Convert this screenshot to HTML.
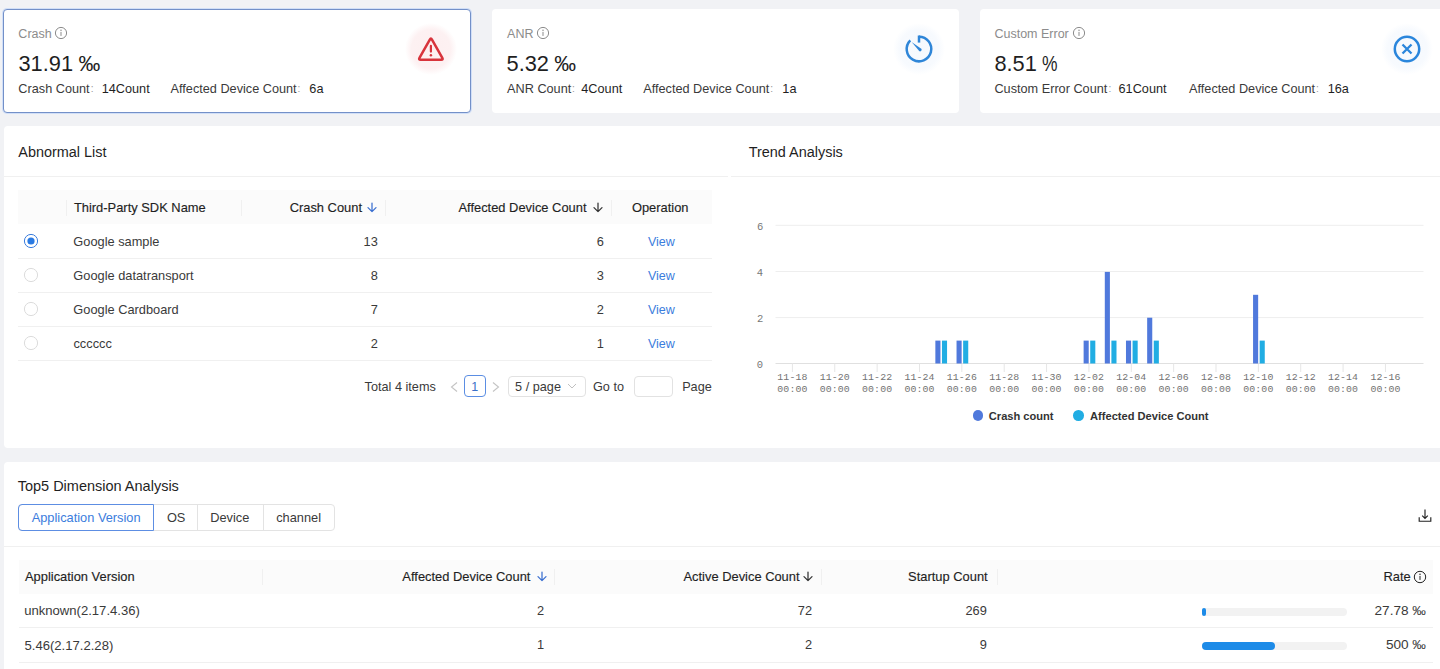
<!DOCTYPE html>
<html><head><meta charset="utf-8"><style>
html,body{margin:0;padding:0;}
body{width:1440px;height:669px;overflow:hidden;background:#f1f2f5;position:relative;font-family:"Liberation Sans",sans-serif;}
.t{position:absolute;white-space:nowrap;line-height:1;}
.b{position:absolute;}
</style></head><body>
<div class="b" style="left:3px;top:9px;width:468px;height:104px;background:#fff;border-radius:4px;border:1px solid #7390c8;box-sizing:border-box;box-shadow:0 0 0 1px rgba(170,200,250,0.45);"></div>
<div class="t" style="left:18.37px;top:27.62px;font-size:12.5px;color:#8c8c8c;">Crash</div>
<svg class="b" style="left:53.23173828125px;top:25.200000000000003px;" width="16" height="16" viewBox="0 0 16 16"><circle cx="8" cy="8" r="5.6" fill="none" stroke="#8c8c8c" stroke-width="1"/><circle cx="8" cy="5.3" r="0.75" fill="#8c8c8c"/><rect x="7.5" y="6.9" width="1" height="4" fill="#8c8c8c"/></svg>
<div class="t" style="left:18.47px;top:52.84px;font-size:21.8px;color:#1f1f1f;">31.91</div>
<div class="t" style="left:78.40px;top:52.84px;font-size:21.8px;color:#1f1f1f;">‰</div>
<div class="t" style="left:18.36px;top:82.75px;font-size:12.7px;color:#3a3a3a;">Crash Count</div>
<div class="t" style="left:90.87px;top:84.20px;font-size:10.16px;color:#999;">:</div>
<div class="t" style="left:101.73px;top:82.75px;font-size:12.7px;color:#1f1f1f;">14Count</div>
<div class="t" style="left:170.58px;top:82.75px;font-size:12.7px;color:#3a3a3a;">Affected Device Count</div>
<div class="t" style="left:297.54px;top:84.20px;font-size:10.16px;color:#999;">:</div>
<div class="t" style="left:309.36px;top:82.75px;font-size:12.7px;color:#1f1f1f;">6a</div>
<div class="b" style="left:404.5px;top:22.5px;width:52px;height:52px;border-radius:50%;background:radial-gradient(circle closest-side,#fdeff0 0%,#fdf1f2 75%,rgba(253,241,242,0) 100%);"></div>
<svg class="b" style="left:415.5px;top:33.5px;" width="30" height="30" viewBox="0 0 30 30"><path d="M15.98 5.52 L26.32 23.88 Q27.4 25.8 25.2 25.8 L4.6 25.8 Q2.4 25.8 3.48 23.88 L13.82 5.52 Q14.9 3.6 15.98 5.52 Z" fill="none" stroke="#d8343c" stroke-width="2.5" stroke-linejoin="round"/><path d="M14.9 11.9 V17.6" stroke="#d8343c" stroke-width="2.2" stroke-linecap="round"/><circle cx="14.9" cy="21.2" r="1.25" fill="#d8343c"/></svg>
<div class="b" style="left:491.5px;top:9px;width:467px;height:104px;background:#fff;border-radius:4px;"></div>
<div class="t" style="left:507.08px;top:27.62px;font-size:12.5px;color:#8c8c8c;">ANR</div>
<svg class="b" style="left:534.6117675781251px;top:25.200000000000003px;" width="16" height="16" viewBox="0 0 16 16"><circle cx="8" cy="8" r="5.6" fill="none" stroke="#8c8c8c" stroke-width="1"/><circle cx="8" cy="5.3" r="0.75" fill="#8c8c8c"/><rect x="7.5" y="6.9" width="1" height="4" fill="#8c8c8c"/></svg>
<div class="t" style="left:506.53px;top:52.84px;font-size:21.8px;color:#1f1f1f;">5.32</div>
<div class="t" style="left:554.35px;top:52.84px;font-size:21.8px;color:#1f1f1f;">‰</div>
<div class="t" style="left:507.08px;top:82.75px;font-size:12.7px;color:#3a3a3a;">ANR Count</div>
<div class="t" style="left:571.91px;top:84.20px;font-size:10.16px;color:#999;">:</div>
<div class="t" style="left:581.31px;top:82.75px;font-size:12.7px;color:#1f1f1f;">4Count</div>
<div class="t" style="left:643.28px;top:82.75px;font-size:12.7px;color:#3a3a3a;">Affected Device Count</div>
<div class="t" style="left:770.24px;top:84.20px;font-size:10.16px;color:#999;">:</div>
<div class="t" style="left:782.33px;top:82.75px;font-size:12.7px;color:#1f1f1f;">1a</div>
<div class="b" style="left:892.5px;top:22.5px;width:52px;height:52px;border-radius:50%;background:radial-gradient(circle closest-side,#f6f9fd 0%,#f7fafe 75%,rgba(247,250,254,0) 100%);"></div>
<svg class="b" style="left:902.5px;top:32.5px;" width="32" height="32" viewBox="0 0 32 32"><path d="M7.3 7.3 A12.3 12.3 0 1 0 16 3.7" fill="none" stroke="#2f86d8" stroke-width="2.5"/><path d="M16 2.5 V9.6" stroke="#2f86d8" stroke-width="2.5"/><path d="M8.6 9.0 L18.6 15.9 Q18.9 17.6 17.6 18.3 Q16.8 18.6 16.2 18.0 Z" fill="#2f86d8"/></svg>
<div class="b" style="left:980px;top:9px;width:467px;height:104px;background:#fff;border-radius:4px;"></div>
<div class="t" style="left:994.47px;top:27.62px;font-size:12.5px;color:#8c8c8c;">Custom Error</div>
<svg class="b" style="left:1070.90888671875px;top:25.200000000000003px;" width="16" height="16" viewBox="0 0 16 16"><circle cx="8" cy="8" r="5.6" fill="none" stroke="#8c8c8c" stroke-width="1"/><circle cx="8" cy="5.3" r="0.75" fill="#8c8c8c"/><rect x="7.5" y="6.9" width="1" height="4" fill="#8c8c8c"/></svg>
<div class="t" style="left:994.45px;top:52.84px;font-size:21.8px;color:#1f1f1f;">8.51</div>
<div class="t" style="left:1042.19px;top:52.84px;font-size:21.8px;color:#1f1f1f;transform:scaleX(0.8);transform-origin:0 0;">%</div>
<div class="t" style="left:994.46px;top:82.75px;font-size:12.7px;color:#3a3a3a;">Custom Error Count</div>
<div class="t" style="left:1108.60px;top:84.20px;font-size:10.16px;color:#999;">:</div>
<div class="t" style="left:1118.56px;top:82.75px;font-size:12.7px;color:#1f1f1f;">61Count</div>
<div class="t" style="left:1189.08px;top:82.75px;font-size:12.7px;color:#3a3a3a;">Affected Device Count</div>
<div class="t" style="left:1316.04px;top:84.20px;font-size:10.16px;color:#999;">:</div>
<div class="t" style="left:1327.63px;top:82.75px;font-size:12.7px;color:#1f1f1f;">16a</div>
<div class="b" style="left:1380.8px;top:22.5px;width:52px;height:52px;border-radius:50%;background:radial-gradient(circle closest-side,#f6f9fd 0%,#f7fafe 75%,rgba(247,250,254,0) 100%);"></div>
<svg class="b" style="left:1390.8px;top:32.5px;" width="32" height="32" viewBox="0 0 32 32"><circle cx="16" cy="16" r="12.2" fill="none" stroke="#2a86dc" stroke-width="2.5"/><path d="M11.5 11.5 L20.5 20.5 M20.5 11.5 L11.5 20.5" stroke="#2a86dc" stroke-width="2.3"/></svg>
<div class="b" style="left:4px;top:126px;width:1446px;height:321.5px;background:#fff;border-radius:4px;"></div>
<div class="b" style="left:4px;top:176px;width:724px;height:1px;background:#f0f0f0;"></div>
<div class="b" style="left:731px;top:176px;width:709px;height:1px;background:#f0f0f0;"></div>
<div class="t" style="left:18.27px;top:144.87px;font-size:14.45px;color:#1f1f1f;">Abnormal List</div>
<div class="t" style="left:748.68px;top:144.87px;font-size:14.45px;color:#1f1f1f;">Trend Analysis</div>
<div class="b" style="left:18px;top:190px;width:694px;height:34px;background:#fbfbfb;"></div>
<div class="b" style="left:66px;top:200px;width:1px;height:16px;background:#f0f0f0;"></div>
<div class="b" style="left:241px;top:200px;width:1px;height:16px;background:#f0f0f0;"></div>
<div class="b" style="left:385px;top:200px;width:1px;height:16px;background:#f0f0f0;"></div>
<div class="b" style="left:611px;top:200px;width:1px;height:16px;background:#f0f0f0;"></div>
<div class="t" style="left:73.91px;top:201.58px;font-size:12.9px;color:#1f1f1f;-webkit-text-stroke:0.15px #1f1f1f;">Third-Party SDK Name</div>
<div class="t" style="left:289.64px;top:201.58px;font-size:12.9px;color:#1f1f1f;-webkit-text-stroke:0.15px #1f1f1f;">Crash Count</div>
<div class="t" style="left:458.47px;top:201.58px;font-size:12.9px;color:#1f1f1f;-webkit-text-stroke:0.15px #1f1f1f;">Affected Device Count</div>
<div class="t" style="left:631.89px;top:201.58px;font-size:12.9px;color:#1f1f1f;-webkit-text-stroke:0.15px #1f1f1f;">Operation</div>
<svg class="b" style="left:366.5px;top:201.5px;" width="10" height="11" viewBox="0 0 10 11"><path d="M5 1 V9.6 M1 5.6 L5 9.6 L9 5.6" fill="none" stroke="#3a6fd0" stroke-width="1.25" stroke-linecap="round" stroke-linejoin="round"/></svg>
<svg class="b" style="left:592.5px;top:201.5px;" width="10" height="11" viewBox="0 0 10 11"><path d="M5 1 V9.6 M1 5.6 L5 9.6 L9 5.6" fill="none" stroke="#333" stroke-width="1.25" stroke-linecap="round" stroke-linejoin="round"/></svg>
<div class="b" style="left:18px;top:258px;width:694px;height:1px;background:#f0f0f0;"></div>
<svg class="b" style="left:23.3px;top:233px;" width="16" height="16" viewBox="0 0 16 16"><circle cx="8" cy="8" r="6.6" fill="#fff" stroke="#3b7ddd" stroke-width="1"/><circle cx="8" cy="8" r="3.6" fill="#2a7ae2"/></svg>
<div class="t" style="left:73.36px;top:235.56px;font-size:12.8px;color:#3a3a3a;">Google sample</div>
<div class="t" style="left:363.62px;top:235.56px;font-size:12.8px;color:#3a3a3a;">13</div>
<div class="t" style="left:596.74px;top:235.56px;font-size:12.8px;color:#3a3a3a;">6</div>
<div class="t" style="left:647.95px;top:235.82px;font-size:12.5px;color:#3b7ddd;">View</div>
<div class="b" style="left:18px;top:292px;width:694px;height:1px;background:#f0f0f0;"></div>
<svg class="b" style="left:23.3px;top:267px;" width="16" height="16" viewBox="0 0 16 16"><circle cx="8" cy="8" r="6.6" fill="#fff" stroke="#dcdcdc" stroke-width="1"/></svg>
<div class="t" style="left:73.36px;top:269.56px;font-size:12.8px;color:#3a3a3a;">Google datatransport</div>
<div class="t" style="left:370.74px;top:269.56px;font-size:12.8px;color:#3a3a3a;">8</div>
<div class="t" style="left:596.74px;top:269.56px;font-size:12.8px;color:#3a3a3a;">3</div>
<div class="t" style="left:647.95px;top:269.82px;font-size:12.5px;color:#3b7ddd;">View</div>
<div class="b" style="left:18px;top:326px;width:694px;height:1px;background:#f0f0f0;"></div>
<svg class="b" style="left:23.3px;top:301px;" width="16" height="16" viewBox="0 0 16 16"><circle cx="8" cy="8" r="6.6" fill="#fff" stroke="#dcdcdc" stroke-width="1"/></svg>
<div class="t" style="left:73.36px;top:303.56px;font-size:12.8px;color:#3a3a3a;">Google Cardboard</div>
<div class="t" style="left:370.82px;top:303.56px;font-size:12.8px;color:#3a3a3a;">7</div>
<div class="t" style="left:596.82px;top:303.56px;font-size:12.8px;color:#3a3a3a;">2</div>
<div class="t" style="left:647.95px;top:303.82px;font-size:12.5px;color:#3b7ddd;">View</div>
<div class="b" style="left:18px;top:360px;width:694px;height:1px;background:#f0f0f0;"></div>
<svg class="b" style="left:23.3px;top:335px;" width="16" height="16" viewBox="0 0 16 16"><circle cx="8" cy="8" r="6.6" fill="#fff" stroke="#dcdcdc" stroke-width="1"/></svg>
<div class="t" style="left:73.46px;top:337.56px;font-size:12.8px;color:#3a3a3a;">cccccc</div>
<div class="t" style="left:370.82px;top:337.56px;font-size:12.8px;color:#3a3a3a;">2</div>
<div class="t" style="left:596.81px;top:337.56px;font-size:12.8px;color:#3a3a3a;">1</div>
<div class="t" style="left:647.95px;top:337.82px;font-size:12.5px;color:#3b7ddd;">View</div>
<div class="t" style="left:364.61px;top:381.15px;font-size:12.7px;color:#3a3a3a;">Total 4 items</div>
<svg class="b" style="left:448px;top:380px;" width="12" height="14" viewBox="0 0 12 14"><path d="M9 2.5 L3.5 7 L9 11.5" fill="none" stroke="#c4c4c4" stroke-width="1.1"/></svg>
<div class="b" style="left:464px;top:375px;width:22px;height:22px;border:1px solid #5b8ee3;border-radius:4px;box-sizing:border-box;"></div>
<div class="t" style="left:471.35px;top:380.92px;font-size:12.5px;color:#3b70c8;">1</div>
<svg class="b" style="left:490px;top:380px;" width="12" height="14" viewBox="0 0 12 14"><path d="M3 2.5 L8.5 7 L3 11.5" fill="none" stroke="#c4c4c4" stroke-width="1.1"/></svg>
<div class="b" style="left:508px;top:376px;width:78px;height:21px;border:1px solid #e2e2e2;border-radius:4px;box-sizing:border-box;"></div>
<div class="t" style="left:515.09px;top:381.15px;font-size:12.7px;color:#3a3a3a;">5 / page</div>
<svg class="b" style="left:566px;top:381.7px;" width="12" height="8" viewBox="0 0 12 8"><path d="M2 2 L6 6 L10 2" fill="none" stroke="#c0c0c0" stroke-width="1"/></svg>
<div class="t" style="left:592.96px;top:381.15px;font-size:12.7px;color:#3a3a3a;">Go to</div>
<div class="b" style="left:634px;top:376px;width:39px;height:21px;border:1px solid #e2e2e2;border-radius:4px;box-sizing:border-box;"></div>
<div class="t" style="left:682.16px;top:381.15px;font-size:12.7px;color:#3a3a3a;">Page</div>
<div class="t" style="left:756.92px;top:222.11px;font-size:10.5px;color:#777;font-family:'Liberation Mono';">6</div>
<div class="t" style="left:756.77px;top:268.31px;font-size:10.5px;color:#777;font-family:'Liberation Mono';">4</div>
<div class="t" style="left:756.99px;top:314.41px;font-size:10.5px;color:#777;font-family:'Liberation Mono';">2</div>
<div class="t" style="left:756.87px;top:360.31px;font-size:10.5px;color:#777;font-family:'Liberation Mono';">0</div>
<div class="t" style="left:777.35px;top:372.71px;font-size:9.9px;color:#737373;font-family:'Liberation Mono';letter-spacing:0.1px">11-18</div>
<div class="t" style="left:777.35px;top:384.71px;font-size:9.9px;color:#737373;font-family:'Liberation Mono';letter-spacing:0.1px">00:00</div>
<div class="t" style="left:819.71px;top:372.71px;font-size:9.9px;color:#737373;font-family:'Liberation Mono';letter-spacing:0.1px">11-20</div>
<div class="t" style="left:819.71px;top:384.71px;font-size:9.9px;color:#737373;font-family:'Liberation Mono';letter-spacing:0.1px">00:00</div>
<div class="t" style="left:862.07px;top:372.71px;font-size:9.9px;color:#737373;font-family:'Liberation Mono';letter-spacing:0.1px">11-22</div>
<div class="t" style="left:862.07px;top:384.71px;font-size:9.9px;color:#737373;font-family:'Liberation Mono';letter-spacing:0.1px">00:00</div>
<div class="t" style="left:904.43px;top:372.71px;font-size:9.9px;color:#737373;font-family:'Liberation Mono';letter-spacing:0.1px">11-24</div>
<div class="t" style="left:904.43px;top:384.71px;font-size:9.9px;color:#737373;font-family:'Liberation Mono';letter-spacing:0.1px">00:00</div>
<div class="t" style="left:946.79px;top:372.71px;font-size:9.9px;color:#737373;font-family:'Liberation Mono';letter-spacing:0.1px">11-26</div>
<div class="t" style="left:946.79px;top:384.71px;font-size:9.9px;color:#737373;font-family:'Liberation Mono';letter-spacing:0.1px">00:00</div>
<div class="t" style="left:989.15px;top:372.71px;font-size:9.9px;color:#737373;font-family:'Liberation Mono';letter-spacing:0.1px">11-28</div>
<div class="t" style="left:989.15px;top:384.71px;font-size:9.9px;color:#737373;font-family:'Liberation Mono';letter-spacing:0.1px">00:00</div>
<div class="t" style="left:1031.51px;top:372.71px;font-size:9.9px;color:#737373;font-family:'Liberation Mono';letter-spacing:0.1px">11-30</div>
<div class="t" style="left:1031.51px;top:384.71px;font-size:9.9px;color:#737373;font-family:'Liberation Mono';letter-spacing:0.1px">00:00</div>
<div class="t" style="left:1073.87px;top:372.71px;font-size:9.9px;color:#737373;font-family:'Liberation Mono';letter-spacing:0.1px">12-02</div>
<div class="t" style="left:1073.87px;top:384.71px;font-size:9.9px;color:#737373;font-family:'Liberation Mono';letter-spacing:0.1px">00:00</div>
<div class="t" style="left:1116.23px;top:372.71px;font-size:9.9px;color:#737373;font-family:'Liberation Mono';letter-spacing:0.1px">12-04</div>
<div class="t" style="left:1116.23px;top:384.71px;font-size:9.9px;color:#737373;font-family:'Liberation Mono';letter-spacing:0.1px">00:00</div>
<div class="t" style="left:1158.59px;top:372.71px;font-size:9.9px;color:#737373;font-family:'Liberation Mono';letter-spacing:0.1px">12-06</div>
<div class="t" style="left:1158.59px;top:384.71px;font-size:9.9px;color:#737373;font-family:'Liberation Mono';letter-spacing:0.1px">00:00</div>
<div class="t" style="left:1200.95px;top:372.71px;font-size:9.9px;color:#737373;font-family:'Liberation Mono';letter-spacing:0.1px">12-08</div>
<div class="t" style="left:1200.95px;top:384.71px;font-size:9.9px;color:#737373;font-family:'Liberation Mono';letter-spacing:0.1px">00:00</div>
<div class="t" style="left:1243.31px;top:372.71px;font-size:9.9px;color:#737373;font-family:'Liberation Mono';letter-spacing:0.1px">12-10</div>
<div class="t" style="left:1243.31px;top:384.71px;font-size:9.9px;color:#737373;font-family:'Liberation Mono';letter-spacing:0.1px">00:00</div>
<div class="t" style="left:1285.67px;top:372.71px;font-size:9.9px;color:#737373;font-family:'Liberation Mono';letter-spacing:0.1px">12-12</div>
<div class="t" style="left:1285.67px;top:384.71px;font-size:9.9px;color:#737373;font-family:'Liberation Mono';letter-spacing:0.1px">00:00</div>
<div class="t" style="left:1328.03px;top:372.71px;font-size:9.9px;color:#737373;font-family:'Liberation Mono';letter-spacing:0.1px">12-14</div>
<div class="t" style="left:1328.03px;top:384.71px;font-size:9.9px;color:#737373;font-family:'Liberation Mono';letter-spacing:0.1px">00:00</div>
<div class="t" style="left:1370.39px;top:372.71px;font-size:9.9px;color:#737373;font-family:'Liberation Mono';letter-spacing:0.1px">12-16</div>
<div class="t" style="left:1370.39px;top:384.71px;font-size:9.9px;color:#737373;font-family:'Liberation Mono';letter-spacing:0.1px">00:00</div>
<svg class="b" style="left:0;top:0" width="1440" height="669"><rect x="775.5" y="224.8" width="648" height="1" fill="#eeeeee"/><rect x="775.5" y="271.0" width="648" height="1" fill="#eeeeee"/><rect x="775.5" y="317.1" width="648" height="1" fill="#eeeeee"/><rect x="775.5" y="363.0" width="648" height="1" fill="#e0e0e0"/><rect x="791.90" y="363.5" width="1" height="8.5" fill="#e6e6e6"/><rect x="834.26" y="363.5" width="1" height="8.5" fill="#e6e6e6"/><rect x="876.62" y="363.5" width="1" height="8.5" fill="#e6e6e6"/><rect x="918.98" y="363.5" width="1" height="8.5" fill="#e6e6e6"/><rect x="961.34" y="363.5" width="1" height="8.5" fill="#e6e6e6"/><rect x="1003.70" y="363.5" width="1" height="8.5" fill="#e6e6e6"/><rect x="1046.06" y="363.5" width="1" height="8.5" fill="#e6e6e6"/><rect x="1088.42" y="363.5" width="1" height="8.5" fill="#e6e6e6"/><rect x="1130.78" y="363.5" width="1" height="8.5" fill="#e6e6e6"/><rect x="1173.14" y="363.5" width="1" height="8.5" fill="#e6e6e6"/><rect x="1215.50" y="363.5" width="1" height="8.5" fill="#e6e6e6"/><rect x="1257.86" y="363.5" width="1" height="8.5" fill="#e6e6e6"/><rect x="1300.22" y="363.5" width="1" height="8.5" fill="#e6e6e6"/><rect x="1342.58" y="363.5" width="1" height="8.5" fill="#e6e6e6"/><rect x="1384.94" y="363.5" width="1" height="8.5" fill="#e6e6e6"/><rect x="935.36" y="340.60" width="5.1" height="22.90" fill="#5079dc"/><rect x="941.96" y="340.60" width="5.1" height="22.90" fill="#21ade3"/><rect x="956.54" y="340.60" width="5.1" height="22.90" fill="#5079dc"/><rect x="963.14" y="340.60" width="5.1" height="22.90" fill="#21ade3"/><rect x="1083.62" y="340.60" width="5.1" height="22.90" fill="#5079dc"/><rect x="1090.22" y="340.60" width="5.1" height="22.90" fill="#21ade3"/><rect x="1104.80" y="271.90" width="5.1" height="91.60" fill="#5079dc"/><rect x="1111.40" y="340.60" width="5.1" height="22.90" fill="#21ade3"/><rect x="1125.98" y="340.60" width="5.1" height="22.90" fill="#5079dc"/><rect x="1132.58" y="340.60" width="5.1" height="22.90" fill="#21ade3"/><rect x="1147.16" y="317.70" width="5.1" height="45.80" fill="#5079dc"/><rect x="1153.76" y="340.60" width="5.1" height="22.90" fill="#21ade3"/><rect x="1253.06" y="294.80" width="5.1" height="68.70" fill="#5079dc"/><rect x="1259.66" y="340.60" width="5.1" height="22.90" fill="#21ade3"/></svg>
<div class="b" style="left:972.5px;top:410.4px;width:10.6px;height:10.6px;border-radius:50%;background:#5079dc;"></div>
<div class="t" style="left:988.84px;top:410.60px;font-size:11.1px;color:#333;font-weight:bold;">Crash count</div>
<div class="b" style="left:1073px;top:410.4px;width:10.6px;height:10.6px;border-radius:50%;background:#21ade3;"></div>
<div class="t" style="left:1090.12px;top:410.60px;font-size:11.1px;color:#333;font-weight:bold;">Affected Device Count</div>
<div class="b" style="left:4px;top:462px;width:1446px;height:220px;background:#fff;border-radius:4px;"></div>
<div class="t" style="left:17.67px;top:479.47px;font-size:14.5px;color:#1f1f1f;">Top5 Dimension Analysis</div>
<div class="b" style="left:18px;top:504px;width:317px;height:27px;border:1px solid #e3e3e3;border-radius:4px;box-sizing:border-box;"></div>
<div class="b" style="left:197px;top:504px;width:1px;height:27px;background:#e3e3e3;"></div>
<div class="b" style="left:263px;top:504px;width:1px;height:27px;background:#e3e3e3;"></div>
<div class="b" style="left:18px;top:504px;width:136px;height:27px;border:1px solid #5d8ee3;border-radius:4px 0 0 4px;box-sizing:border-box;"></div>
<div class="t" style="left:31.73px;top:511.66px;font-size:12.8px;color:#3b7ddd;">Application Version</div>
<div class="t" style="left:166.89px;top:511.66px;font-size:12.8px;color:#3a3a3a;">OS</div>
<div class="t" style="left:210.20px;top:511.66px;font-size:12.8px;color:#3a3a3a;">Device</div>
<div class="t" style="left:276.21px;top:511.66px;font-size:12.8px;color:#3a3a3a;">channel</div>
<svg class="b" style="left:1417px;top:507px;" width="16" height="16" viewBox="0 0 16 16"><path d="M8 2.5 V11.4 M5.2 8.6 L8 11.4 L10.8 8.6 M2.2 10.2 V14.2 H13.8 V10.2" fill="none" stroke="#222" stroke-width="1.15"/></svg>
<div class="b" style="left:4px;top:546px;width:1436px;height:1px;background:#f0f0f0;"></div>
<div class="b" style="left:19px;top:560px;width:1414px;height:34px;background:#fbfbfb;"></div>
<div class="b" style="left:262px;top:569px;width:1px;height:16px;background:#f0f0f0;"></div>
<div class="b" style="left:553.5px;top:569px;width:1px;height:16px;background:#f0f0f0;"></div>
<div class="b" style="left:821.3px;top:569px;width:1px;height:16px;background:#f0f0f0;"></div>
<div class="b" style="left:997px;top:569px;width:1px;height:16px;background:#f0f0f0;"></div>
<div class="t" style="left:24.97px;top:570.83px;font-size:12.9px;color:#1f1f1f;-webkit-text-stroke:0.15px #1f1f1f;">Application Version</div>
<div class="t" style="left:402.37px;top:570.83px;font-size:12.9px;color:#1f1f1f;-webkit-text-stroke:0.15px #1f1f1f;">Affected Device Count</div>
<svg class="b" style="left:536.5px;top:571px;" width="10" height="11" viewBox="0 0 10 11"><path d="M5 1 V9.6 M1 5.6 L5 9.6 L9 5.6" fill="none" stroke="#3a6fd0" stroke-width="1.25" stroke-linecap="round" stroke-linejoin="round"/></svg>
<div class="t" style="left:683.47px;top:570.83px;font-size:12.9px;color:#1f1f1f;-webkit-text-stroke:0.15px #1f1f1f;">Active Device Count</div>
<svg class="b" style="left:803px;top:571px;" width="10" height="11" viewBox="0 0 10 11"><path d="M5 1 V9.6 M1 5.6 L5 9.6 L9 5.6" fill="none" stroke="#333" stroke-width="1.25" stroke-linecap="round" stroke-linejoin="round"/></svg>
<div class="t" style="left:908.11px;top:570.83px;font-size:12.9px;color:#1f1f1f;-webkit-text-stroke:0.15px #1f1f1f;">Startup Count</div>
<div class="t" style="left:1383.54px;top:570.83px;font-size:12.9px;color:#1f1f1f;-webkit-text-stroke:0.15px #1f1f1f;">Rate</div>
<svg class="b" style="left:1411.7px;top:569px;" width="16" height="16" viewBox="0 0 16 16"><circle cx="8" cy="8" r="5.7" fill="none" stroke="#222" stroke-width="1"/><circle cx="8" cy="5.3" r="0.75" fill="#222"/><rect x="7.5" y="6.9" width="1" height="4" fill="#222"/></svg>
<div class="b" style="left:19px;top:627.0px;width:1414px;height:1px;background:#f0f0f0;"></div>
<div class="t" style="left:24.15px;top:604.41px;font-size:13.1px;color:#3a3a3a;">unknown(2.17.4.36)</div>
<div class="t" style="left:537.12px;top:604.66px;font-size:12.8px;color:#3a3a3a;">2</div>
<div class="t" style="left:797.81px;top:604.66px;font-size:12.8px;color:#3a3a3a;">72</div>
<div class="t" style="left:965.45px;top:604.66px;font-size:12.8px;color:#3a3a3a;">269</div>
<div class="b" style="left:1202px;top:607.7px;width:145px;height:8px;background:#f2f2f2;border-radius:4px;"></div>
<div class="b" style="left:1202px;top:607.7px;width:4.0600000000000005px;height:8px;background:#1d8be8;border-radius:4px;"></div>
<div class="t" style="left:1374.56px;top:603.98px;font-size:13.6px;color:#3a3a3a;">27.78 ‰</div>
<div class="b" style="left:19px;top:661.5px;width:1414px;height:1px;background:#f0f0f0;"></div>
<div class="t" style="left:24.48px;top:638.81px;font-size:13.1px;color:#3a3a3a;">5.46(2.17.2.28)</div>
<div class="t" style="left:537.11px;top:639.06px;font-size:12.8px;color:#3a3a3a;">1</div>
<div class="t" style="left:804.92px;top:639.06px;font-size:12.8px;color:#3a3a3a;">2</div>
<div class="t" style="left:979.69px;top:639.06px;font-size:12.8px;color:#3a3a3a;">9</div>
<div class="b" style="left:1202px;top:642.0px;width:145px;height:8px;background:#f2f2f2;border-radius:4px;"></div>
<div class="b" style="left:1202px;top:642.0px;width:72.5px;height:8px;background:#1d8be8;border-radius:4px;"></div>
<div class="t" style="left:1385.90px;top:638.38px;font-size:13.6px;color:#3a3a3a;">500 ‰</div>
</body></html>
